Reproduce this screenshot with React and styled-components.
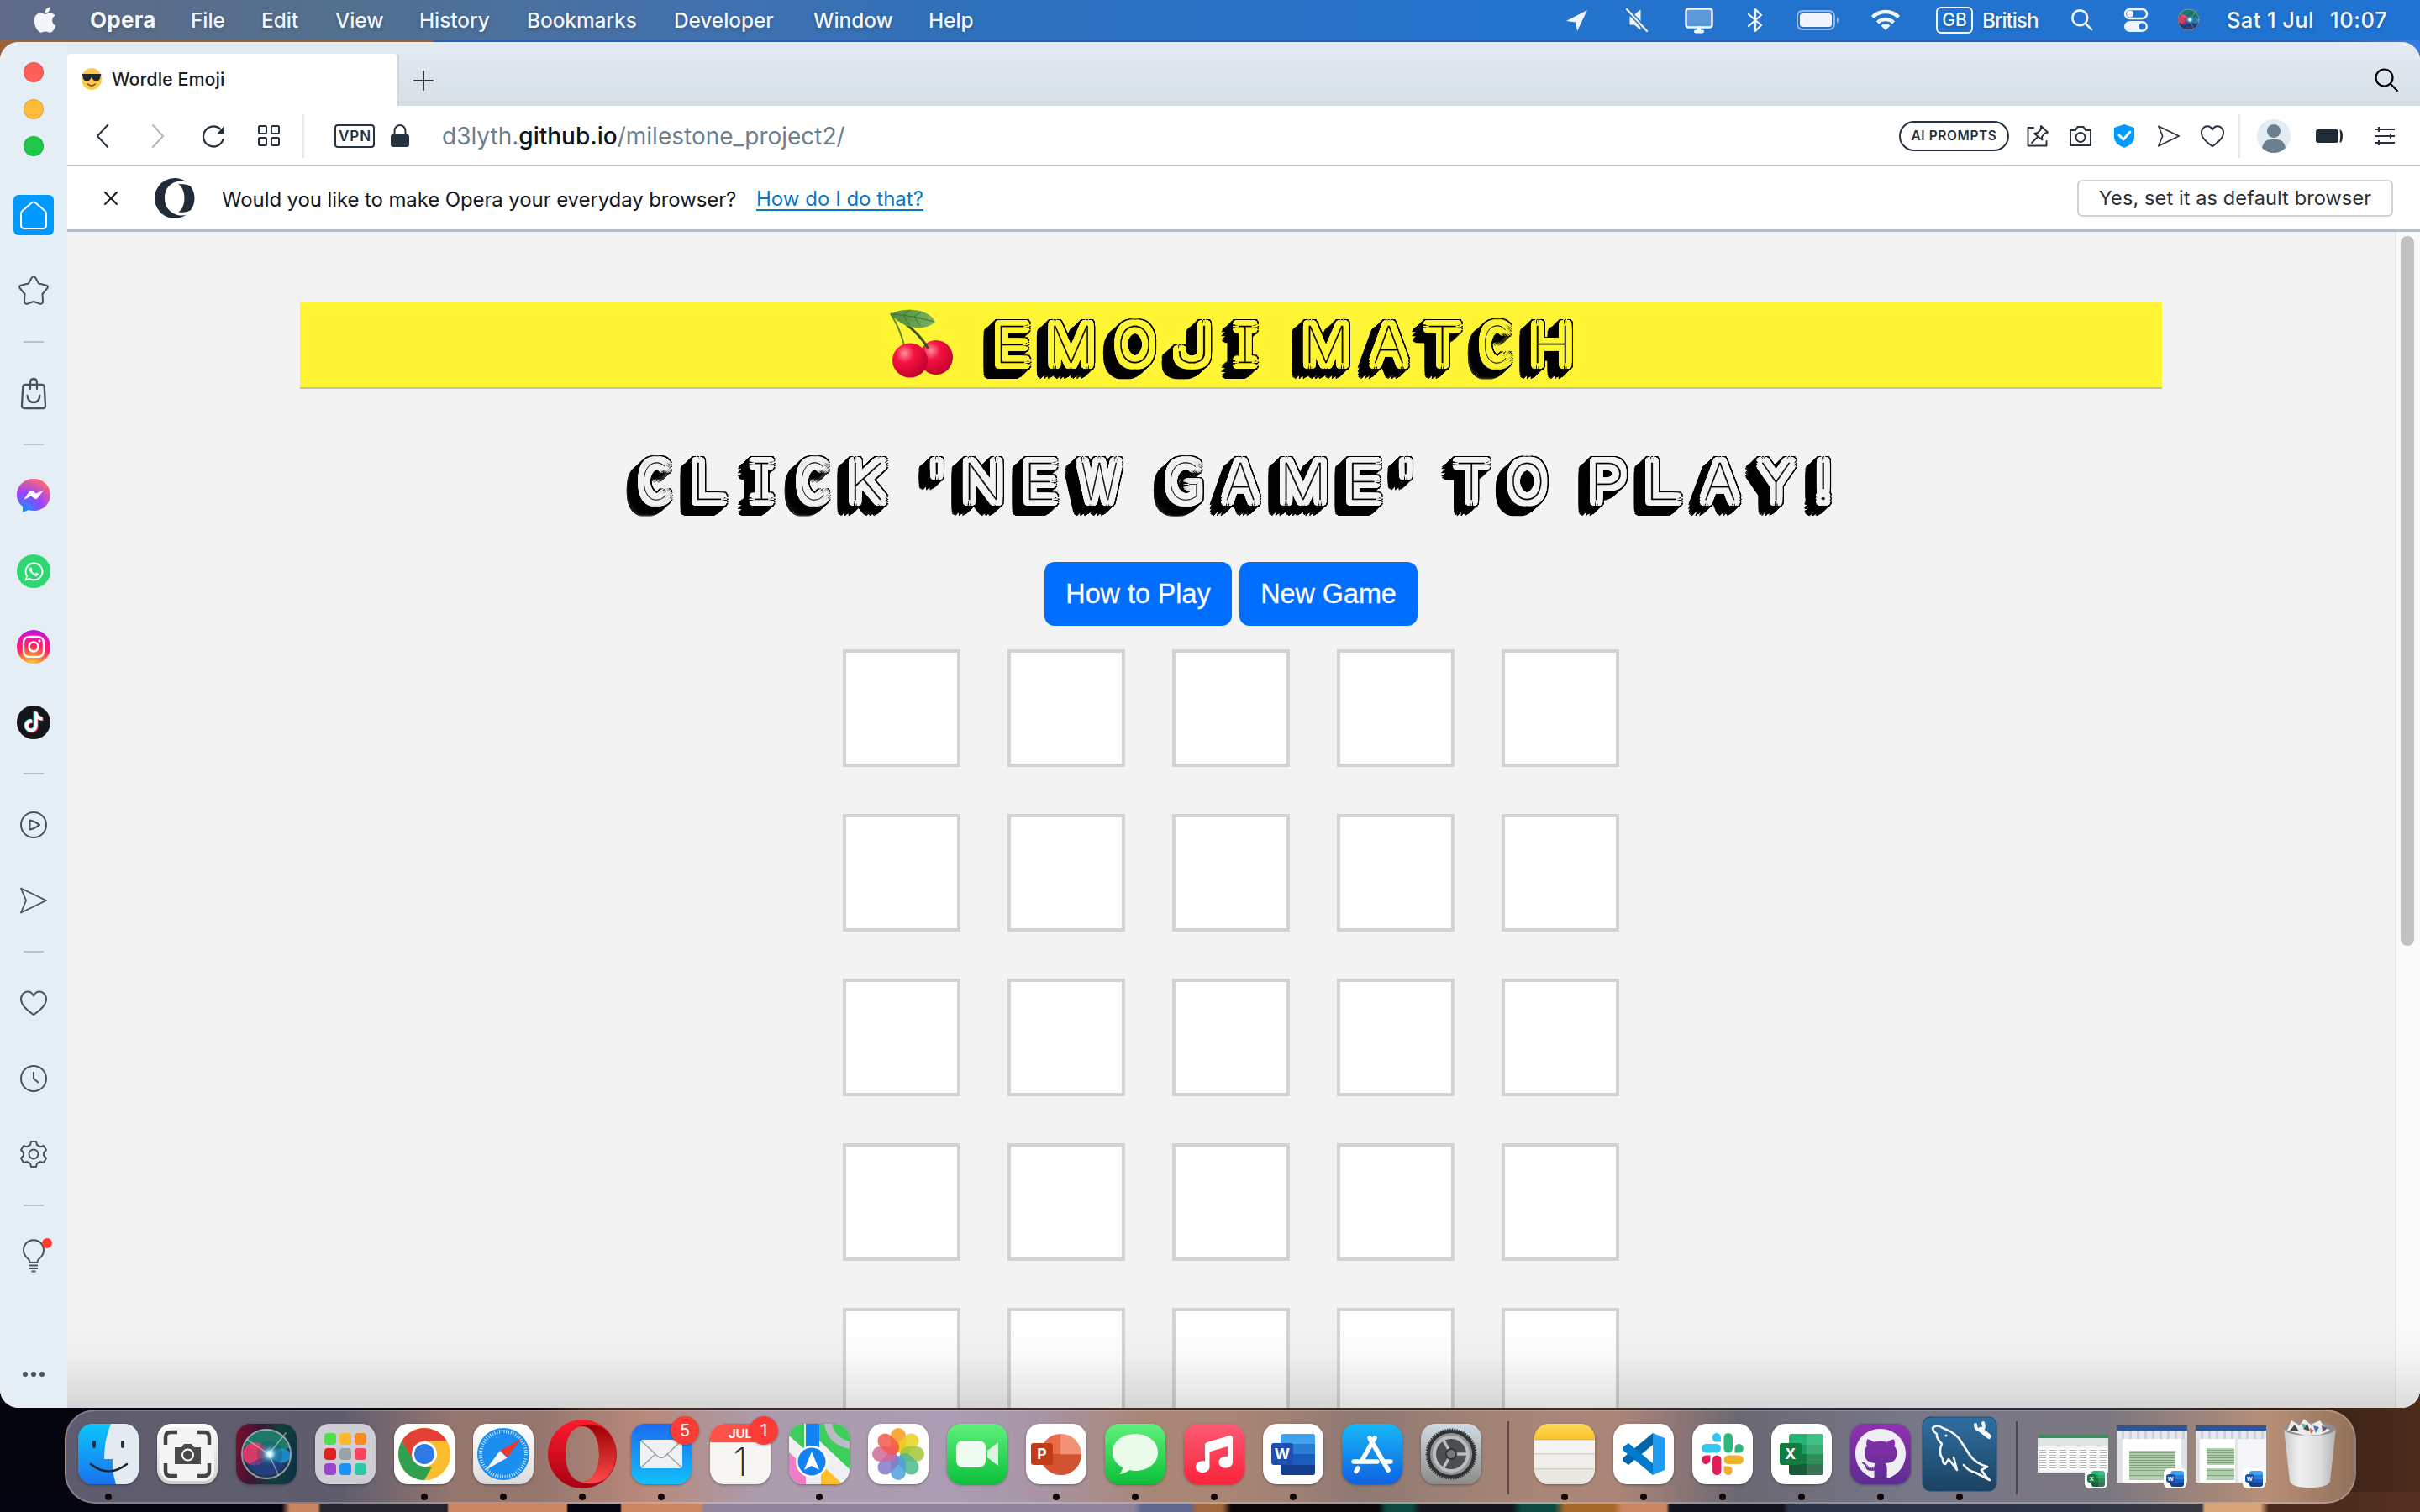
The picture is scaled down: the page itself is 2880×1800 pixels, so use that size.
import React from 'react';
import styled, { createGlobalStyle, css } from 'styled-components';
import { FaApple, FaWhatsapp, FaInstagram, FaTiktok, FaGithub, FaMusic } from 'react-icons/fa6';

const ui = "Inter, Roboto, 'Liberation Sans', sans-serif";

const GlobalStyle = createGlobalStyle`
  * { box-sizing: border-box; }
  html, body { margin: 0; padding: 0; overflow: hidden; }
  body { font-family: ${ui}; }
  svg { display: block; flex: none; overflow: visible; }
`;

const Desktop = styled.div`
  width: 2880px;
  height: 1800px;
  display: flex;
  flex-direction: column;
  background:
    linear-gradient(90deg, #05050f 0 335px, #c98560 345px 378px, #26242c 382px 532px, #cb8562 534px 674px, #05060f 676px 738px, #cb8562 740px 834px, #8f839b 838px 1350px, #5e6890 1358px 1415px, #a0663b 1425px 1455px, #0b0709 1465px 1640px, #0c4a40 1650px 1680px, #14151d 1690px 1800px, #0c4a40 1810px 1850px, #a46828 1862px 1920px, #cb8562 1930px 1983px, #12121c 1987px 2122px, #2c3448 2128px 2400px, #383840 2620px, #d8a478 2624px 2690px, #4a2a1c 2700px, #54301f 2880px) 0 1776px / 2880px 24px no-repeat,
    linear-gradient(90deg, #05050d 0 640px, #3c2c2b 700px 1900px, #2b2b33 2000px 2600px, #2e1c14 2700px, #4d2c1c 2880px) 0 1640px / 2880px 160px no-repeat,
    linear-gradient(90deg, #9a6238 0 515px, #2464b8 516px 2780px, #3a7be4 2880px) 0 0 / 2880px 120px no-repeat,
    #05050f;
`;

const MenuBar = styled.header`
  height: 48px;
  flex: none;
  display: flex;
  align-items: center;
  justify-content: space-between;
  padding-bottom: 1px;
  color: #f2f5fa;
  font-size: 24.4px;
  font-weight: 500;
  background: linear-gradient(90deg, #5f6b88 0, #53708f 400px, #4371ac 800px, #2f70bb 1150px, #2573cb 1700px, #1f74d2 2880px);
  text-shadow: 0 2px 4px rgba(0, 0, 0, 0.25);
`;

const Row = styled.div`
  display: flex;
  align-items: center;
`;

const Slot = styled.div`
  width: ${(p) => p.$w}px;
  flex: none;
  display: flex;
  align-items: center;
  justify-content: ${(p) => (p.$start ? 'flex-start' : 'center')};
  white-space: pre;
  letter-spacing: ${(p) => p.$ls || 0}px;
  font-weight: ${(p) => p.$weight || 'inherit'};
  ${(p) => p.$size && css`font-size: ${p.$size}px;`}
`;

const InputBadge = styled.span`
  width: 44px;
  height: 32px;
  border: 2px solid #f2f5fa;
  border-radius: 6px;
  display: flex;
  align-items: center;
  justify-content: center;
  font-size: 21px;
`;

const Window = styled.div`
  margin-top: 2px;
  height: 1626px;
  flex: none;
  display: flex;
  border-radius: 22px;
  overflow: hidden;
  background: #f3f3f3;
`;

const SideBar = styled.nav`
  width: 80px;
  flex: none;
  display: flex;
  flex-direction: column;
  align-items: center;
  background: #e5edf5;
  color: #48525c;
`;

const Lights = styled.div`
  display: flex;
  flex-direction: column;
  gap: 20px;
  padding: 24px 0 25px;
`;

const Light = styled.span`
  width: 24px;
  height: 24px;
  border-radius: 50%;
  background: ${(p) => p.$c};
  border: 1px solid rgba(0, 0, 0, 0.12);
`;

const SideItem = styled.div`
  height: 90px;
  width: 80px;
  display: flex;
  align-items: center;
  justify-content: center;
  position: relative;
`;

const SideRule = styled.div`
  height: 32px;
  display: flex;
  align-items: center;
  &::before { content: ''; width: 24px; height: 2px; background: #b4c2ce; }
`;

const HomeTile = styled.span`
  width: 48px;
  height: 48px;
  border-radius: 6px;
  background: #0099ff;
  display: flex;
  align-items: center;
  justify-content: center;
  color: #fff;
`;

const AppBubble = styled.span`
  width: 40px;
  height: 40px;
  border-radius: 50%;
  background: ${(p) => p.$bg};
  color: ${(p) => p.$fg || '#fff'};
  display: flex;
  align-items: center;
  justify-content: center;
`;

const AlertDot = styled.i`
  position: absolute;
  left: 50px;
  top: 23px;
  width: 12px;
  height: 12px;
  border-radius: 50%;
  background: #ff3b30;
`;

const Dots = styled.div`
  margin-top: 92px;
  display: flex;
  gap: 4px;
  i { width: 6px; height: 6px; border-radius: 50%; background: #48525c; }
`;

const Main = styled.div`
  flex: 1;
  display: flex;
  flex-direction: column;
  min-width: 0;
`;

const TabStrip = styled.div`
  height: 76px;
  flex: none;
  padding-top: 14px;
  display: flex;
  background: linear-gradient(#e4ebf3, #d6dfe6);
`;

const Tab = styled.div`
  width: 393px;
  height: 62px;
  padding: 0 0 2px 17px;
  display: flex;
  align-items: center;
  gap: 12px;
  background: #fff;
  border-radius: 4px 4px 0 0;
  box-shadow: 2px 0 0 #cdd8e1;
  font-size: 21.5px;
  color: #1b2026;
  font-weight: 450;
`;

const StripEnd = styled.div`
  flex: 1;
  display: flex;
  justify-content: space-between;
  align-items: flex-start;
  padding: 17px 26px 0 19px;
  svg:first-child { margin-top: 3px; }
`;

const ToolBar = styled.div`
  height: 72px;
  flex: none;
  display: flex;
  justify-content: space-between;
  align-items: center;
  padding-top: 1px;
  background: #fff;
  border-bottom: 2px solid #bcc8d2;
  color: #26323d;
`;

const Divider = styled.span`
  width: 2px;
  height: 52px;
  background: #e6e9ec;
`;

const Vpn = styled.span`
  width: 48px;
  height: 28px;
  border: 2px solid #26323d;
  border-radius: 4px;
  font-size: 17px;
  font-weight: 600;
  letter-spacing: 1px;
  padding-left: 1px;
  display: flex;
  align-items: center;
  justify-content: center;
`;

const Url = styled.span`
  font-size: 28px;
  color: #6c7f8e;
  b { font-weight: 450; color: #101418; }
`;

const Pill = styled.span`
  width: 131px;
  height: 36px;
  border: 2px solid #26323d;
  border-radius: 18px;
  display: flex;
  align-items: center;
  justify-content: center;
  font-size: 15.5px;
  font-weight: 600;
  letter-spacing: 0.6px;
`;

const InfoBar = styled.div`
  height: 78px;
  flex: none;
  display: flex;
  align-items: center;
  justify-content: space-between;
  padding: 0 32px 0 0;
  background: #fff;
  border-bottom: 3px solid #b2bfcc;
  color: #15191d;
  font-size: 24px;
`;

const InfoText = styled.span`
  padding-top: 3px;
`;

const InfoLink = styled.a`
  margin-top: 4px;
  color: #0a78c4;
  border-bottom: 2px solid #0a78c4;
  line-height: 24px;
  letter-spacing: 0.02px;
`;

const DefaultButton = styled.button`
  width: 376px;
  height: 44px;
  padding: 0;
  border: 2px solid #cfd3d5;
  border-radius: 6px;
  background: #fff;
  color: #2c3034;
  font-family: ${ui};
  font-size: 23.5px;
  letter-spacing: 0.12px;
`;

const Viewport = styled.div`
  flex: 1;
  display: flex;
  min-height: 0;
  position: relative;
  background: #f3f3f3;
`;

const BottomShade = styled.div`
  position: absolute;
  left: 0;
  right: 0;
  bottom: 0;
  height: 100px;
  background: linear-gradient(rgba(0, 0, 0, 0), rgba(0, 0, 0, 0.025) 40%, rgba(0, 0, 0, 0.12));
`;

const Page = styled.main`
  flex: 1;
  display: flex;
  flex-direction: column;
  align-items: center;
  padding-top: 84px;
  overflow: hidden;
`;

const ScrollTrack = styled.div`
  width: 30px;
  flex: none;
  background: #fafafa;
  border-left: 2px solid #e8e8e8;
  padding: 5px 5px;
`;

const ScrollThumb = styled.div`
  width: 16px;
  height: 845px;
  border-radius: 8px;
  background: #c1c1c1;
`;

const Banner = styled.div`
  width: 2216px;
  height: 103px;
  flex: none;
  display: flex;
  align-items: flex-start;
  background: #fff535;
  border-bottom: 2px solid #bfbfbf;
  padding: 9px 0 0 703px;
`;

/* Letters are built from a hairline glyph: a rounded band round it, a thin
   black rim, and a black extrusion that runs down and to the left. */
const ring = (r, s, dx = 0, dy = 0, count = 28) =>
  Array.from({ length: count }, (_, i) => {
    const a = (i / count) * Math.PI * 2;
    const c = Math.cos(a);
    const n = Math.sin(a);
    const x = Math.sign(c) * Math.pow(Math.abs(c), 0.5) * r;
    const y = Math.sign(n) * Math.pow(Math.abs(n), 0.5) * r;
    return `${((x + dx) / s).toFixed(2)}px ${(y + dy).toFixed(2)}px 0`;
  });

const rim = (s) => {
  const out = [];
  for (let k = 0; k <= 12; k += 1) out.push(...ring(8.4, s, -k, k * 0.9, 20));
  out.push(...ring(4, s, -6, 5, 12), ...ring(4, s, -12, 10.8, 12), ...ring(8.4, s, 0, 0, 40));
  return out.join(', ');
};

const band = (s, c) => [
  ...ring(1.2, s, 0, 0, 8), ...ring(2.6, s, 0, 0, 12), ...ring(4, s, 0, 0, 20),
  ...ring(5.4, s, 0, 0, 28), ...ring(6.9, s, 0, 0, 44),
].map((v) => `${v} ${c}`).join(', ');

const ShadeLine = styled.h1`
  margin: ${(p) => p.$mt || 0}px 0 0;
  display: flex;
  align-items: baseline;
  line-height: 72px;
  font-weight: 100;
`;

const Glyph = styled.span`
  position: relative;
  flex: none;
  width: ${(p) => p.$w}px;
  margin-right: ${(p) => p.$gap}px;
  font-family: ${(p) => p.$font}, sans-serif;
  font-size: ${(p) => p.$size}px;
  font-feature-settings: 'cv08' 1;
  white-space: pre;
  color: #000;
  transform-origin: 0 50%;
  transform: translateX(${(p) => p.$x}px) scaleX(${(p) => p.$s});
  -webkit-text-stroke: 1.8px #000;
  text-shadow: ${(p) => rim(p.$s)};
  &::before, &::after {
    content: attr(data-letter);
    position: absolute;
    left: 0;
    top: 0;
  }
  &::before { color: ${(p) => p.$face}; -webkit-text-stroke: 1.8px ${(p) => p.$face}; text-shadow: ${(p) => band(p.$s, p.$face)}; }
  &::after { text-shadow: none; -webkit-text-stroke: 0.3px #000; }
`;

const Headline = styled.div`
  height: 206px;
  flex: none;
  width: 1416px;
  padding-top: 73px;
`;

const Actions = styled.div`
  display: flex;
  gap: 9px;
  flex: none;
`;

const GameButton = styled.button`
  width: ${(p) => p.$w}px;
  height: 76px;
  padding: 0;
  border: 0;
  border-radius: 12px;
  background: #006fff;
  color: #fff;
  font-family: 'Liberation Sans', Arial, sans-serif;
  font-size: 32.3px;
  -webkit-text-stroke: 0.3px #fff;
`;

const Board = styled.div`
  margin-top: 28px;
  display: grid;
  flex: none;
  grid-template-columns: repeat(5, 140px);
  grid-auto-rows: 140px;
  gap: 56px;
`;

const Cell = styled.div`
  border: 4px solid #d3d3d3;
  background: #fff;
`;

const Dock = styled.footer`
  margin: 2px 0 0 77px;
  width: 2727px;
  height: 112px;
  flex: none;
  display: flex;
  border: 2px solid rgba(255, 255, 255, 0.22);
  border-radius: 36px;
  padding: 15px 2px 0 3px;
  background: linear-gradient(90deg, #5e5c6e 0, #5f5d6d 330px, #95766f 460px, #94766f 560px, #b9897a 690px, #ab9bab 820px, #ab9cb4 1060px, #a894a4 1160px, #a98675 1290px, #aa8575 1400px, #8f7973 1540px, #9c8074 1640px, #a98678 1760px, #ab8478 1850px, #6b6872 1990px, #777788 2200px, #7b7780 2430px, #b78f77 2620px, #927059 2727px);
`;

const DockItem = styled.div`
  width: 94px;
  height: 94px;
  flex: none;
  position: relative;
  display: flex;
  justify-content: center;
  align-items: flex-start;
  ${(p) => p.$open && css`
    &::after {
      content: '';
      position: absolute;
      left: 43px;
      top: 83px;
      width: 8px;
      height: 8px;
      border-radius: 50%;
      background: #120606;
    }
  `}
`;

const DockRule = styled.div`
  width: 41px;
  height: 84px;
  display: flex;
  justify-content: center;
  &::before { content: ''; width: 2px; background: rgba(50, 30, 35, 0.6); margin-top: -3px; }
`;

const Tile = styled.div`
  width: 72px;
  height: 72px;
  border-radius: 17px;
  overflow: hidden;
  display: flex;
  align-items: center;
  justify-content: center;
  background: ${(p) => p.$bg || '#fff'};
  color: #fff;
  box-shadow: 0 1px 3px rgba(0, 0, 0, 0.35);
`;

const Count = styled.span`
  position: absolute;
  left: 58px;
  top: -9px;
  width: 34px;
  height: 34px;
  border-radius: 50%;
  background: #fb3b35;
  color: #fff;
  font-size: 20px;
  display: flex;
  align-items: center;
  justify-content: center;
  box-shadow: 0 1px 3px rgba(0, 0, 0, 0.3);
`;

const CalendarFace = styled.div`
  width: 72px;
  height: 72px;
  display: flex;
  flex-direction: column;
  align-items: center;
  color: #2b2b2b;
  span { width: 100%; height: 22px; line-height: 24px; text-align: center; font-size: 15px; font-weight: 600; color: #fff; background: #fb5147; }
  strong { font-size: 46px; font-weight: 200; line-height: 46px; }
`;

const LaunchGrid = styled.div`
  display: grid;
  grid-template-columns: repeat(3, 14px);
  gap: 4px;
`;

const LaunchKey = styled.i`
  height: 14px;
  border-radius: 4px;
  background: ${(p) => p.$c};
`;

const OfficeMark = styled.div`
  height: ${(p) => p.$s * 50}px;
  display: flex;
  align-items: center;
  border-radius: ${(p) => (p.$round ? '50%' : '3px')};
  background: ${(p) => p.$bg};
  margin-left: ${(p) => p.$s * 12}px;
  width: ${(p) => p.$s * (p.$round ? 50 : 42)}px;
  b {
    width: ${(p) => p.$s * 27}px;
    height: ${(p) => p.$s * 27}px;
    margin-left: ${(p) => p.$s * -12}px;
    flex: none;
    display: flex;
    align-items: center;
    justify-content: center;
    border-radius: 3px;
    background: ${(p) => p.$key};
    color: #fff;
    font-size: ${(p) => p.$s * 18}px;
    font-weight: 700;
  }
`;

const Thumb = styled.div`
  width: 84px;
  height: ${(p) => p.$h}px;
  margin-top: ${(p) => p.$mt}px;
  display: flex;
  flex-direction: column;
  background: ${(p) => p.$bg || '#f4f4f4'};
`;

const ThumbBar = styled.div`
  height: ${(p) => p.$h}px;
  background: ${(p) => p.$c};
`;

const ThumbSheet = styled.div`
  flex: 1;
  margin: ${(p) => p.$m};
  background: ${(p) => p.$bg};
`;

const MiniApp = styled.span`
  position: absolute;
  left: 61px;
  top: 53px;
  width: 27px;
  height: 24px;
  border-radius: 6px;
  background: #fff;
  display: flex;
  align-items: center;
  justify-content: center;
`;

const Raised = styled.div`
  margin-top: ${(p) => -p.$by}px;
`;

const S = ({ w = 32, h, vb, sw = 2, children, ...rest }) => (
  <svg width={w} height={h || w} viewBox={vb || `0 0 ${w} ${h || w}`} fill="none" stroke="currentColor" strokeWidth={sw} strokeLinejoin="round" strokeLinecap="round" {...rest}>{children}</svg>
);

const HeartIcon = ({ size, sw = 2 }) => (
  <S w={size} vb="0 0 32 32" sw={sw}><path d="M16 30C10 26 1 19 1 11.500C1 6 5 2.500 9 2.500c3 0 5.500 1.500 7 5 1.500-3.500 4-5 7-5 4 0 8 3.500 8 9C31 19 22 26 16 30Z" /></S>
);

const PlaneIcon = ({ size, sw = 2 }) => (
  <S w={size} vb="0 0 32 32" sw={sw}><path d="M1 1.500 31 16 1 30.500 7 16Z" /></S>
);

const SearchIcon = ({ size, sw }) => (
  <S w={size} vb="0 0 28 28" sw={sw}><circle cx="11.500" cy="11.500" r="10" /><path d="m19 19 8 8" /></S>
);

const CoolFace = () => (
  <S w={24} h={28} vb="0 0 24 28" stroke="none">
    <ellipse cx="12" cy="14" rx="12" ry="13" fill="#fdc94f" />
    <path d="M.5 8h23l-1 3c-.5 4-2 5.500-5 5.500S13 14 12 11.500C11 14 9.500 16.500 6.500 16.500S2 15 1.500 11Z" fill="#22282f" />
    <path d="M7.500 20q4.500 4 9 0" stroke="#7a4a12" strokeWidth="1.600" />
  </S>
);

const OperaMark = () => (
  <S w={48} stroke="none">
    <path fillRule="evenodd" fill="#1f2c38" d="M24 0A24 24 0 1 0 38 43.500C30 47 12 42 12 24S28 1 38 4.500A24 24 0 0 0 24 0Z" />
    <path fill="#1f2c38" d="M28 7.500C38 12 38 36 28 40.500 34 41.500 41 40 43 38A24 24 0 0 0 43 10C41 8 34 6.500 28 7.500Z" />
  </S>
);

const Cherries = () => (
  <S w={74} h={82} stroke="none">
    <defs>
      <radialGradient id="berry" cx="0.35" cy="0.3" r="0.75"><stop offset="0" stopColor="#ff8fa0" /><stop offset="0.35" stopColor="#f6143f" /><stop offset="1" stopColor="#c0002c" /></radialGradient>
      <linearGradient id="leaf" x1="0" x2="1"><stop offset="0" stopColor="#4b8a3c" /><stop offset="1" stopColor="#7db35f" /></linearGradient>
    </defs>
    <ellipse cx="54" cy="56.500" rx="20" ry="20.500" fill="url(#berry)" />
    <path d="M1 6Q12 24 17 46" stroke="#5b8a2f" strokeWidth="2" />
    <path d="M1 5Q32 24 44 45" stroke="#33561f" strokeWidth="3" />
    <ellipse cx="23" cy="60" rx="21" ry="20.500" fill="url(#berry)" />
    <path d="M0 5C14-3 44-3 53 14 44 24 18 26 0 5Z" fill="url(#leaf)" />
    <path d="M0 5Q26 6 51 14M15 6l8-6M28 8l8-6M16 7l6 11M29 9l6 10" stroke="#3b7130" strokeWidth="1" />
  </S>
);

const SiriOrb = ({ size }) => (
  <S w={size} vb="0 0 64 64" stroke="none">
    <defs>
      <radialGradient id="orb"><stop offset="0" stopColor="#fff" /><stop offset="0.2" stopColor="#b9f0f5" /><stop offset="0.5" stopColor="#3a86b0" stopOpacity="0.7" /><stop offset="1" stopColor="#143a55" stopOpacity="0.2" /></radialGradient>
    </defs>
    <circle cx="32" cy="32" r="31" fill="#1d3a50" />
    <path d="M32 1A31 31 0 0 1 61 24Q44 34 32 32T4 20A31 31 0 0 1 32 1Z" fill="#1d9070" opacity="0.75" />
    <ellipse cx="18" cy="32" rx="15" ry="14" fill="#ee3a68" opacity="0.9" />
    <ellipse cx="50" cy="34" rx="12" ry="9" fill="#1e9be0" opacity="0.8" />
    <path d="M10 46Q30 28 54 46 40 64 20 56Z" fill="#26419c" opacity="0.6" />
    <circle cx="36" cy="32" r="16" fill="url(#orb)" />
    <path d="M35 32 8 14M35 32 56 6M35 32l12 26" stroke="#fff" strokeWidth="1.500" opacity="0.45" />
    <circle cx="32" cy="32" r="30" stroke="#c9c0cc" strokeOpacity="0.7" strokeWidth="2" />
  </S>
);

const pen = typeof document !== 'undefined' ? document.createElement('canvas').getContext('2d') : null;
const openLetters = 'CG';

const measure = (letter, font, size) => {
  if (!pen) return { left: 0, width: size / 2 };
  pen.font = `100 ${size}px ${font}`;
  const m = pen.measureText(letter);
  return { left: -m.actualBoundingBoxLeft, width: m.actualBoundingBoxLeft + m.actualBoundingBoxRight };
};

const Letter = ({ letter, w, gap, face }) => {
  const font = openLetters.includes(letter) ? 'Lato' : 'Inter';
  const size = font === 'Lato' ? 61 : 60.5;
  const ink = measure(letter, font, size);
  const ratio = (w - 18) / ink.width;
  const s = letter === 'I' ? 1 : Math.min(1.5, Math.max(0.6, ratio));
  const x = w / 2 - (ink.left + ink.width / 2) * s;
  return <Glyph data-letter={letter} $w={w} $gap={gap} $s={s} $x={letter === 'I' ? w / 2 - 11 : x} $font={font} $size={size} $face={face}>{letter}</Glyph>;
};

const Sign = ({ letters, face, mt }) => (
  <ShadeLine $mt={mt}>
    {letters.map(([letter, w, gap], i) => <Letter key={i} letter={letter} w={w} gap={gap} face={face} />)}
  </ShadeLine>
);

const titleLetters = [
  ['E', 47, 17], ['M', 60, 19], ['O', 53, 16], ['J', 50, 18], ['I', 42, 45.5],
  ['M', 60, 18], ['A', 53, 12], ['T', 51, 15.5], ['C', 44, 17], ['H', 54, 0],
];

const promptLetters = [
  ['C', 45, 18], ['L', 48, 16.5], ['I', 43, 17.5], ['C', 45, 17], ['K', 52, 44.5],
  ["'", 22, 17.5], ['N', 52.500, 19], ['E', 46, 17], ['W', 60.500, 45.500],
  ['G', 49.500, 17], ['A', 52, 17.500], ['M', 61.500, 17.500], ['E', 47.500, 16], ["'", 22, 41.500],
  ['T', 50, 15.500], ['O', 52.500, 45.500],
  ['P', 49.500, 16], ['L', 49.500, 15.500], ['A', 54, 13.500], ['Y', 52.500, 18], ['!', 23, 0],
];

const menus = [['File', 84], ['Edit', 88], ['View', 100], ['History', 128], ['Bookmarks', 175], ['Developer', 166], ['Window', 137], ['Help', 60]];

const TopMenu = () => (
  <MenuBar>
    <Row>
      <Slot $w={107}><FaApple size={35} /></Slot>
      <Slot $w={120} $start $weight={700} $size={26} $ls={0.3}>Opera</Slot>
      {menus.map(([name, w]) => <Slot key={name} $w={w} $start $ls={-0.05}>{name}</Slot>)}
    </Row>
    <Row>
      <Slot $w={44}><S w={26} stroke="none"><path d="M25 1 0 14l11 1.500L13 26Z" fill="currentColor" /></S></Slot>
      <Slot $w={98}><S w={28} sw={2.200}><path d="M6 10v9h5l7 6V15M11 8l7-6v12" fill="currentColor" strokeWidth="1" /><path d="M2 1l24 26" stroke="#2573cb" strokeWidth="5" /><path d="M2 1l24 26" /></S></Slot>
      <Slot $w={50}><S w={34} h={30} sw={2.500}><rect x="1.500" y="1.500" width="31" height="22" rx="3" fill="#ffffff44" /><path d="M13 28.500h8M17 24v4" strokeWidth="4" /></S></Slot>
      <Slot $w={84}><S w={18} h={28} sw={2.200}><path d="m1 7 15 13-7 7V1l7 7L1 21" /></S></Slot>
      <Slot $w={64}><S w={51} h={24} sw={2}><rect x="1" y="1" width="44" height="22" rx="6" opacity=".55" /><rect x="4" y="4" width="38" height="16" rx="3.500" fill="currentColor" stroke="none" /><path d="M48 8q4 4 0 8Z" fill="currentColor" opacity=".55" stroke="none" /></S></Slot>
      <Slot $w={98}><S w={34} h={25} sw={4.500} strokeLinecap="butt"><path d="M1.500 9.500a22 22 0 0 1 31 0M7.500 16a13.500 13.500 0 0 1 19 0" /><path d="M17 25l-5.500-5.500a8 8 0 0 1 11 0Z" fill="currentColor" stroke="none" /></S></Slot>
      <Slot $w={66}><InputBadge>GB</InputBadge></Slot>
      <Slot $w={92} $start $ls={-1.1}>British</Slot>
      <Slot $w={52}><SearchIcon size={25} sw={3} /></Slot>
      <Slot $w={78}><S w={28} h={26} sw={2.500}><rect x="1" y="0" width="26" height="11" rx="5.500" /><circle cx="7" cy="5.500" r="4" fill="currentColor" stroke="none" /><rect x="0" y="14" width="28" height="13" rx="6.500" fill="currentColor" stroke="none" /><circle cx="21.500" cy="20.500" r="4" fill="#2573cb" stroke="none" /></S></Slot>
      <Slot $w={46}><SiriOrb size={27} /></Slot>
      <Slot $w={23} />
      <Slot $w={123} $start $size={25.5} $ls={0.4}>Sat 1 Jul</Slot>
      <Slot $w={107} $start $size={25.5} $ls={0.6}>10:07</Slot>
    </Row>
  </MenuBar>
);

const Side = () => (
  <SideBar>
    <Lights><Light $c="#ff5f57" /><Light $c="#febc3b" /><Light $c="#20c84a" /></Lights>
    <SideItem><HomeTile><S w={32} h={36} sw={2}><path d="M2 13.500 13 4Q16 1 19 4l11 9.500Q31 15 31 17v13q0 4-4 4H5q-4 0-4-4V17q0-2 1-3.500Z" /></S></HomeTile></SideItem>
    <SideItem><S w={36} sw={2}><path d="M15.500 3q2.500-3.500 5 0l3.500 6.500 8.500 2q4 1 1.500 4L28.500 22l.5 8.500q0 4-4 3L18 31l-7 2.500q-4 1-4-3L7.500 22 2 15.500q-2.500-3 1.500-4l8.500-2Z" /></S></SideItem>
    <SideRule />
    <SideItem><S w={30} h={37} sw={2.300}><path d="M5 8h20q2.500 0 2.700 2.500L29 33q0 3-3 3H4q-3 0-3-3l1.300-22.500Q2.500 8 5 8ZM11 13V6q0-5 4-5t4 5v7M7.500 21q1 8 7.500 8t7.500-8" /></S></SideItem>
    <SideRule />
    <SideItem>
      <S w={40} stroke="none">
        <defs><radialGradient id="msg" cx="0.2" cy="1" r="1.100"><stop offset="0" stopColor="#0a95ff" /><stop offset="0.55" stopColor="#a040ff" /><stop offset="1" stopColor="#ff6c6c" /></radialGradient></defs>
        <path d="M20 0C9 0 0 8 0 19c0 6 3 11 7 14v7l7-3c2 .6 4 1 6 1 11 0 20-8 20-19S31 0 20 0Z" fill="url(#msg)" />
        <path d="m8 25 7-10q2-2 4-.5l4 3 9-4-7 9q-2 2.500-4 1l-4-3Z" fill="#fff" />
      </S>
    </SideItem>
    <SideItem><AppBubble $bg="#2dd873"><FaWhatsapp size={25} /></AppBubble></SideItem>
    <SideItem><AppBubble $bg="radial-gradient(circle at 45% 105%, #ffd23f 0, #ff7a35 30%, #ff2065 52%, #f013b0 72%, #8a1cff 100%)"><FaInstagram size={30} /></AppBubble></SideItem>
    <SideItem>
      <AppBubble $bg="#141617">
        <S w={26} vb="0 0 26 26" stroke="none">
          <FaTiktok x="0" y="0" size={24} color="#25f4ee" /><FaTiktok x="2" y="1.500" size={24} color="#fe2c55" /><FaTiktok x="1" y="0.700" size={24} color="#fff" />
        </S>
      </AppBubble>
    </SideItem>
    <SideRule />
    <SideItem><S w={32}><circle cx="16" cy="16" r="15" /><path d="M11.500 10.500v11q6-1 11.500-5.500-5.500-4.500-11.500-5.500Z" /></S></SideItem>
    <SideItem><PlaneIcon size={32} sw={1.800} /></SideItem>
    <SideRule />
    <SideItem><HeartIcon size={32} /></SideItem>
    <SideItem><S w={32}><circle cx="16" cy="16" r="15" /><path d="M16 8v8l6 5" strokeLinecap="butt" /></S></SideItem>
    <SideItem><S w={32}><circle cx="16" cy="16" r="5.500" /><path d="M13 1h6l1 4 4 2.200 4-1.200 3 5-3 3.500v3l3 3.500-3 5-4-1-4 2-1 4h-6l-1-4-4-2-4 1-3-5 3-3.500v-3L1 11l3-5 4 1.200L12 5Z" /></S></SideItem>
    <SideRule />
    <SideItem><S w={26} h={38}><path d="M8.500 26q0-3-3-5.500A12 12 0 1 1 20.500 20.500Q17.500 23 17.500 26Z" /><path d="M8 29.500h10M8 33h10M10.500 36.500h5" strokeLinecap="butt" /></S><AlertDot /></SideItem>
    <Dots><i /><i /><i /></Dots>
  </SideBar>
);

const Chrome = () => (
  <>
    <TabStrip>
      <Tab><CoolFace />Wordle Emoji</Tab>
      <StripEnd>
        <S w={24}><path d="M12 1v22M1 12h22" stroke="#30363c" /></S>
        <SearchIcon size={28} sw={2.200} />
      </StripEnd>
    </TabStrip>
    <ToolBar>
      <Row>
        <Slot $w={84}><S w={16} h={28}><path d="M14 1 2 14l12 13" /></S></Slot>
        <Slot $w={48}><S w={16} h={28} opacity="0.35"><path d="m2 1 12 13L2 27" /></S></Slot>
        <Slot $w={84}><S w={26} sw={2.300}><path d="M24.500 17A12 12 0 1 1 21 4.500" /><path d="M25.500 1v9h-8Z" fill="currentColor" stroke="none" /></S></Slot>
        <Slot $w={48}><S w={26}><rect x="1" y="1" width="9" height="9" rx="1.500" /><rect x="16" y="1" width="9" height="9" rx="1.500" /><rect x="1" y="15" width="9" height="9" rx="1.500" /><rect x="16" y="15" width="9" height="9" rx="1.500" /></S></Slot>
        <Slot $w={34}><Divider /></Slot>
        <Slot $w={88}><Vpn>VPN</Vpn></Slot>
        <Slot $w={20}><S w={22} h={28}><rect x="0" y="12" width="22" height="15" rx="3" fill="currentColor" stroke="none" /><path d="M4.500 13V8a6.500 7 0 0 1 13 0v5" /></S></Slot>
        <Slot $w={40} />
        <Url>d3lyth.<b>github.io</b>/milestone_project2/</Url>
      </Row>
      <Row>
        <Slot $w={149}><Pill>AI PROMPTS</Pill></Slot>
        <Slot $w={50}><S w={26} sw={1.900}><path d="M8 3H1.500v21.500h22V19" /><path d="M17 1l8 7.500-4 1.500-3 4 .5 3.500L9 10l4-1 3.500-3.500ZM13 14l-7 7" /></S></Slot>
        <Slot $w={52}><S w={26} h={24}><path d="M1 5h6l2.500-4h7L19 5h6v18H1Z" /><circle cx="13" cy="13.500" r="5.500" /></S></Slot>
        <Slot $w={52}><S w={24} h={28} stroke="none"><path d="M12 0 24 4v12q0 7-12 12Q0 23 0 16V4Z" fill="#0099ff" /><path d="m6 13 5 5 8-9" stroke="#fff" strokeWidth="3" /></S></Slot>
        <Slot $w={54}><PlaneIcon size={26} sw={2} /></Slot>
        <Slot $w={49}><HeartIcon size={28} sw={2.200} /></Slot>
        <Slot $w={16}><Divider /></Slot>
        <Slot $w={66}><S w={40} stroke="none"><circle cx="20" cy="20" r="20" fill="#e3ebf3" /><circle cx="20" cy="14" r="8" fill="#6c7f8e" /><path d="M6 34q2-10 10-10h8q8 0 10 10Q28 40 20 40T6 34Z" fill="#6c7f8e" /></S></Slot>
        <Slot $w={66}><S w={32} h={16} stroke="none"><rect width="27" height="16" rx="3" fill="#1f2c38" /><path d="M28.500 0Q30 8 28.500 16q3.500-1 3.500-8t-3.500-8Z" fill="#1f2c38" /></S></Slot>
        <Slot $w={66}><S w={24} h={22} strokeLinecap="butt"><path d="M0 3h24M0 11h24M0 19h24M5 0v6M19 8v6M5 16v6" /></S></Slot>
        <Slot $w={9} />
      </Row>
    </ToolBar>
    <InfoBar>
      <Row>
        <Slot $w={104}><S w={14}><path d="m0 0 14 14M14 0 0 14" /></S></Slot>
        <Slot $w={48}><OperaMark /></Slot>
        <Slot $w={32} />
        <Slot $w={636} $start $ls={-0.11}><InfoText>Would you like to make Opera your everyday browser?</InfoText></Slot>
        <InfoLink>How do I do that?</InfoLink>
      </Row>
      <DefaultButton>Yes, set it as default browser</DefaultButton>
    </InfoBar>
  </>
);

const yellow = '#fff535';
const grey = '#f3f3f3';

const Game = () => (
  <Viewport>
    <Page>
      <Banner>
        <Slot $w={120.5} $start><Cherries /></Slot>
        <Sign letters={titleLetters} face={yellow} mt={4} />
      </Banner>
      <Headline>
        <Sign letters={promptLetters} face={grey} />
      </Headline>
      <Actions>
        <GameButton $w={223}>How to Play</GameButton>
        <GameButton $w={212}>New Game</GameButton>
      </Actions>
      <Board>{Array.from({ length: 25 }, (_, i) => <Cell key={i} />)}</Board>
    </Page>
    <ScrollTrack><ScrollThumb /></ScrollTrack>
    <BottomShade />
  </Viewport>
);

const wordBg = 'linear-gradient(#3fa2ee 0 25%, #2b7cd3 25% 50%, #1a5dbe 50% 75%, #123f90 75%)';
const excelBg = 'linear-gradient(90deg, transparent 50%, #ffffff22 50%), linear-gradient(#23b573 0 27%, #1b9e5d 27% 50%, #107c41 50% 74%, #185c37 74%)';
const sheetBg = 'linear-gradient(90deg, #dfe1e6 0 7px, #fff 7px 77px, #dfe1e6 77px)';
const paneBg = 'linear-gradient(90deg, #dfe1e6 0 5px, #fff 5px 47px, #e4e4e8 47px 50px, #f6f6f8 50px)';
const petals = ['#f99a1c', '#e8d21b', '#a4c639', '#4fb98a', '#4f9fe0', '#8a78c8', '#d0699a', '#f2584a'];
const launch = ['#4fe04a', '#fbb92a', '#f78a22', '#dc2320', '#98a2a8', '#fb4560', '#9a45d0', '#1795f5', '#2bc7a0'];

const Apps = () => (
  <Dock>
    <DockItem $open><Tile $bg="linear-gradient(#0bc6fb, #1a72ee)"><S w={72}><path d="M39 0q-8 18-8 42h10q-1 14 4 30h27V0Z" fill="#e5e9f0" stroke="none" /><path d="M19 22v5M53 22v5" stroke="#25303c" strokeWidth="4" /><path d="M15 48q21 17 43 0" stroke="#1a2430" strokeWidth="2.500" /></S></Tile></DockItem>
    <DockItem><Tile $bg="linear-gradient(#fff, #cfcfcf)"><S w={72}><rect x="4" y="4" width="64" height="64" rx="13" fill="#f4f4f4" stroke="none" /><path d="M10 25V16q0-6 6-6h8M48 10h8q6 0 6 6v9M62 47v9q0 6-6 6h-8M24 62h-8q-6 0-6-6v-9" stroke="#444" strokeWidth="4.500" strokeLinecap="butt" /><path d="M21 28h8l3-4h9l3 4h8v20H21Z" fill="#4a4a4a" stroke="none" /><circle cx="36.500" cy="37" r="6.500" stroke="#fff" strokeWidth="2" /></S></Tile></DockItem>
    <DockItem><Tile $bg="linear-gradient(100deg, #7c0f2c, #3c1535 35%, #123f3c 65%, #0c2f45)"><SiriOrb size={62} /></Tile></DockItem>
    <DockItem><Tile $bg="#cfced4"><LaunchGrid>{launch.map((c) => <LaunchKey key={c} $c={c} />)}</LaunchGrid></Tile></DockItem>
    <DockItem $open>
      <Tile><S w={62} vb="0 0 62 62" stroke="none"><circle cx="31" cy="31" r="31" fill="#fbbc2e" /><path d="M4.200 15.500A31 31 0 0 1 57.800 15.500H31L17.600 38.700Z" fill="#e34133" /><path d="M4.200 15.500 17.600 38.700 31 46.500h13.400L31 62A31 31 0 0 1 4.200 15.500Z" fill="#2ea04f" /><path d="M57.800 15.500H31v15.500L44.400 38.700 31 62A31 31 0 0 0 57.800 15.500Z" fill="#fbbc2e" /><circle cx="31" cy="31" r="15" fill="#fff" /><circle cx="31" cy="31" r="12" fill="#3079e8" /></S></Tile>
    </DockItem>
    <DockItem $open>
      <Tile $bg="linear-gradient(#fff, #dcdcdc)"><S w={62} vb="0 0 62 62" stroke="none"><circle cx="31" cy="31" r="31" fill="#1b8ef0" /><circle cx="31" cy="31" r="27" stroke="#fff" strokeOpacity="0.8" strokeWidth="4" strokeDasharray="1 1.830" strokeLinecap="butt" /><path d="M52 13 35.500 35.500 27 27Z" fill="#e9382f" /><path d="M10 50 35.500 35.500 27 27Z" fill="#f4f6f8" /></S></Tile>
    </DockItem>
    <DockItem $open>
      <Raised $by={5}>
        <S w={82} stroke="none"><defs><linearGradient id="op" x2="0" y2="1"><stop offset="0" stopColor="#ff1b2d" /><stop offset="1" stopColor="#a70014" /></linearGradient><linearGradient id="op2" x2="0" y2="1"><stop offset="0" stopColor="#9c0000" /><stop offset="1" stopColor="#ff4b4b" /></linearGradient></defs><path fillRule="evenodd" d="M41 0a41 41 0 1 0 .1 0ZM41 8c12 0 20 14 20 33S53 74 41 74 21 60 21 41 29 8 41 8Z" fill="url(#op)" /><path d="M34 10C50 2 61 20 61 41S50 80 34 72q15 9 34-1a41 41 0 0 0 0-60Q50 1 34 10Z" fill="url(#op2)" /></S>
      </Raised>
    </DockItem>
    <DockItem $open>
      <Tile $bg="linear-gradient(#1c6cf2, #12c0fb)"><S w={50} h={34} sw={1.500} stroke="#9aa0a6"><rect x="0" y="0" width="50" height="34" rx="4" fill="#f0f1f2" stroke="none" /><path d="m2 2 19 18q4 3 8 0L48 2M2 32l16-15M48 32 32 17" /></S></Tile>
      <Count>5</Count>
    </DockItem>
    <DockItem><Tile $bg="#f7f6f3"><CalendarFace><span>JUL</span><strong>1</strong></CalendarFace></Tile><Count>1</Count></DockItem>
    <DockItem $open>
      <Tile $bg="#f0f0f2"><S w={72} stroke="none"><path d="M0 14 18 30V0H0ZM36 0h36v54L36 20Z" fill="#3fce5b" /><path d="M46-4q2 26 30 30" stroke="#b9bcc4" strokeWidth="9" /><path d="M0 34 20 52v20H0Z" fill="#ee7cc6" /><path d="M38 48 64 72H38Z" fill="#fdc12c" /><path d="M20 0h16v40H20Z" fill="#1283f5" /><circle cx="27" cy="45" r="19" fill="#fff" /><circle cx="27" cy="45" r="16.500" fill="#1281f3" /><path d="m27 33 9 22-9-5-9 5Z" fill="#fff" /></S></Tile>
    </DockItem>
    <DockItem><Tile><S w={64} vb="-32 -32 64 64" stroke="none">{petals.map((c, i) => <rect key={c} x="-9" y="-31" width="18" height="29" rx="9" fill={c} opacity="0.85" transform={`rotate(${i * 45})`} />)}</S></Tile></DockItem>
    <DockItem><Tile $bg="linear-gradient(#5ef07c, #0cc03a)"><S w={50} h={32} stroke="none"><rect width="35" height="32" rx="8" fill="#effaf0" /><path d="M37 12 50 2v28L37 20Z" fill="#dff3e2" /></S></Tile></DockItem>
    <DockItem $open><Tile><OfficeMark $s={0.98} $round $bg="linear-gradient(90deg, transparent 50%, #ffffff40 50%) top / 100% 50% no-repeat, linear-gradient(#ed6c47 50%, #d35230 50%)" $key="#c23c1a"><b>P</b></OfficeMark></Tile></DockItem>
    <DockItem $open><Tile $bg="linear-gradient(#5ef07c, #0cc03a)"><S w={54} h={48} stroke="none"><path d="M27 0C12 0 0 9 0 22c0 8 5 14 12 18q0 4-4 8 8-1 12-5 3 1 7 1c15 0 27-9 27-22S42 0 27 0Z" fill="#eafbec" /></S></Tile></DockItem>
    <DockItem $open><Tile $bg="linear-gradient(#fb5c74, #fa233b)"><FaMusic size={44} /></Tile></DockItem>
    <DockItem $open><Tile><OfficeMark $s={0.98} $bg={wordBg} $key="#1b51b4"><b>W</b></OfficeMark></Tile></DockItem>
    <DockItem><Tile $bg="linear-gradient(#16b8f8, #0f62e0)"><S w={50} h={46} stroke="#fff" sw={5.500}><path d="M28 4 12 32M22 4l22 38M3 32h28M40 32h7M8 40l-2 3.500" /></S></Tile></DockItem>
    <DockItem>
      <Tile $bg="linear-gradient(#cfdbe2, #8c8c8a)"><S w={64} vb="-32 -32 64 64" stroke="#303234"><circle r="29" strokeWidth="3" strokeDasharray="1.500 1.300" strokeLinecap="butt" /><circle r="27" fill="#8f9496" strokeWidth="4" /><circle r="20" stroke="#b9bec0" strokeWidth="4" fill="#4b4f52" /><path d="M0 0h20M0 0-10-18M0 0-10 18" stroke="#b9bec0" strokeWidth="3.500" /><circle r="6" fill="#777" /></S></Tile>
    </DockItem>
    <DockRule />
    <DockItem $open><Tile $bg="linear-gradient(#fdd85a, #fcc32a 18px, #c9a030 18px, #f6f5f1 20px 35px, #d4d2cd 35px 36px, #f1efea 37px 53px, #d4d2cd 53px 54px, #eae8e1 55px)" /></DockItem>
    <DockItem $open><Tile><S w={50} stroke="none"><path d="M36 0 50 6v38l-14 6Z" fill="#1f9cf0" /><path d="M36 0v14L7 38 0 33v-3Z" fill="#0065a9" /><path d="M36 50V36L7 12 0 17v3Z" fill="#007acc" /></S></Tile></DockItem>
    <DockItem $open>
      <Tile><S w={50} stroke="none"><g fill="#36c5f0"><rect x="0" y="13" width="23" height="10.500" rx="5.200" /><path d="M23 10.500h-5.200A5.200 5.200 0 1 1 23 5.200Z" /></g><g fill="#2eb67d"><rect x="26.500" y="0" width="10.500" height="23.500" rx="5.200" /><path d="M39.500 23.500v-5.300a5.200 5.200 0 1 1 5.300 5.300Z" /></g><g fill="#ecb22e"><rect x="26.500" y="26.500" width="23.500" height="10.500" rx="5.200" /><path d="M26.500 39.500h5.300a5.200 5.200 0 1 1-5.300 5.300Z" /></g><g fill="#e01e5a"><rect x="13" y="26.500" width="10.500" height="23.500" rx="5.200" /><path d="M10.500 26.500v5.300a5.200 5.200 0 1 1-5.300-5.300Z" /></g></S></Tile>
    </DockItem>
    <DockItem $open><Tile><OfficeMark $s={0.98} $bg={excelBg} $key="#107c41"><b>X</b></OfficeMark></Tile></DockItem>
    <DockItem $open><Tile $bg="linear-gradient(#9032b0, #5c2d91)"><FaGithub size={62} color="#f0eef5" /></Tile></DockItem>
    <DockItem $open>
      <Raised $by={8}>
        <S w={88} stroke="#f2f6f8" sw={2.600}>
          <defs><linearGradient id="sea" x2="0" y2="1"><stop offset="0" stopColor="#2f6ea2" /><stop offset="1" stopColor="#1c4260" /></linearGradient></defs>
          <rect width="88" height="88" rx="9" fill="url(#sea)" stroke="#1c4a70" strokeWidth="1" />
          <path d="M37 48 41 63Q36 56 31 50L27 56Q24 56 24 50 18 42 23 32 16 25 17 20 12 17 12 13 17 8 24 13 41 19 47 31L56 45Q64 56 77 59L70 63Q74 70 80 75 70 70 63 66 54 64 49 57" />
          <circle cx="28" cy="22" r="1.500" fill="#f2f6f8" stroke="none" />
          <path d="M69 15 79 23" strokeWidth="6" /><path d="M63 9q0 7 6 6t3-8" strokeWidth="4" />
        </S>
      </Raised>
    </DockItem>
    <DockRule />
    <DockItem><Thumb $h={45} $mt={13}><ThumbBar $h={4} $c="#3f8a5f" /><ThumbBar $h={9} $c="#dde6e0" /><ThumbSheet $m="3px 2px" $bg="repeating-linear-gradient(90deg, transparent 0 8px, #f4f4f4 8px 12px), repeating-linear-gradient(#fff 0 2px, #b4b5b4 2px 3px)" /></Thumb><MiniApp><OfficeMark $s={0.38} $bg={excelBg} $key="#107c41"><b>X</b></OfficeMark></MiniApp></DockItem>
    <DockItem><Thumb $h={68} $mt={2} $bg={sheetBg}><ThumbBar $h={6} $c="#2b579a" /><ThumbBar $h={10} $c="repeating-linear-gradient(90deg, #e6e9ef 0 6px, #cdd3de 6px 9px)" /><ThumbSheet $m="14px 14px 3px 15px" $bg="repeating-linear-gradient(#b3cfb0 0 2px, #7fa37c 2px 3px)" /></Thumb><MiniApp><OfficeMark $s={0.38} $bg={wordBg} $key="#1b51b4"><b>W</b></OfficeMark></MiniApp></DockItem>
    <DockItem><Thumb $h={68} $mt={2} $bg={paneBg}><ThumbBar $h={6} $c="#2b579a" /><ThumbBar $h={10} $c="repeating-linear-gradient(90deg, #e6e9ef 0 6px, #cdd3de 6px 9px)" /><ThumbSheet $m="11px 38px 3px 13px" $bg="linear-gradient(transparent 20px, #fff 20px 24px, transparent 24px), repeating-linear-gradient(#b3cfb0 0 2px, #7fa37c 2px 3px)" /></Thumb><MiniApp><OfficeMark $s={0.38} $bg={wordBg} $key="#1b51b4"><b>W</b></OfficeMark></MiniApp></DockItem>
    <DockItem>
      <Raised $by={6}>
        <S w={64} h={82} stroke="none">
          <defs><linearGradient id="bin" x2="1" y2="0"><stop offset="0" stopColor="#c9c9cb" /><stop offset="0.3" stopColor="#f0f0f1" /><stop offset="0.7" stopColor="#dcdcde" /><stop offset="1" stopColor="#b3b3b6" /></linearGradient></defs>
          <path d="M1 12Q32 26 63 12L56 74q-2 8-24 8T8 74Z" fill="url(#bin)" />
          <ellipse cx="32" cy="12" rx="31" ry="8" fill="#8e8e92" />
          <path d="m5 14 5-12 10 6 5-8 8 7 11-5 4 6 8 6-12 5-18 1Z" fill="#ececee" />
          <path d="m8 14 6-7 5 8ZM24 12l5-6 3 9Z" fill="#4a4a50" /><path d="m36 8 7 2-4 7Z" fill="#3c77c4" /><path d="m22 6 6 1-4 4Z" fill="#3db18a" /><path d="m32 11 5 3-4 4Z" fill="#d85a3a" /><path d="m46 8 7 3-6 5Z" fill="#5c5c62" />
        </S>
      </Raised>
    </DockItem>
  </Dock>
);

export default function App() {
  return (
    <Desktop>
      <GlobalStyle />
      <TopMenu />
      <Window>
        <Side />
        <Main>
          <Chrome />
          <Game />
        </Main>
      </Window>
      <Apps />
    </Desktop>
  );
}
